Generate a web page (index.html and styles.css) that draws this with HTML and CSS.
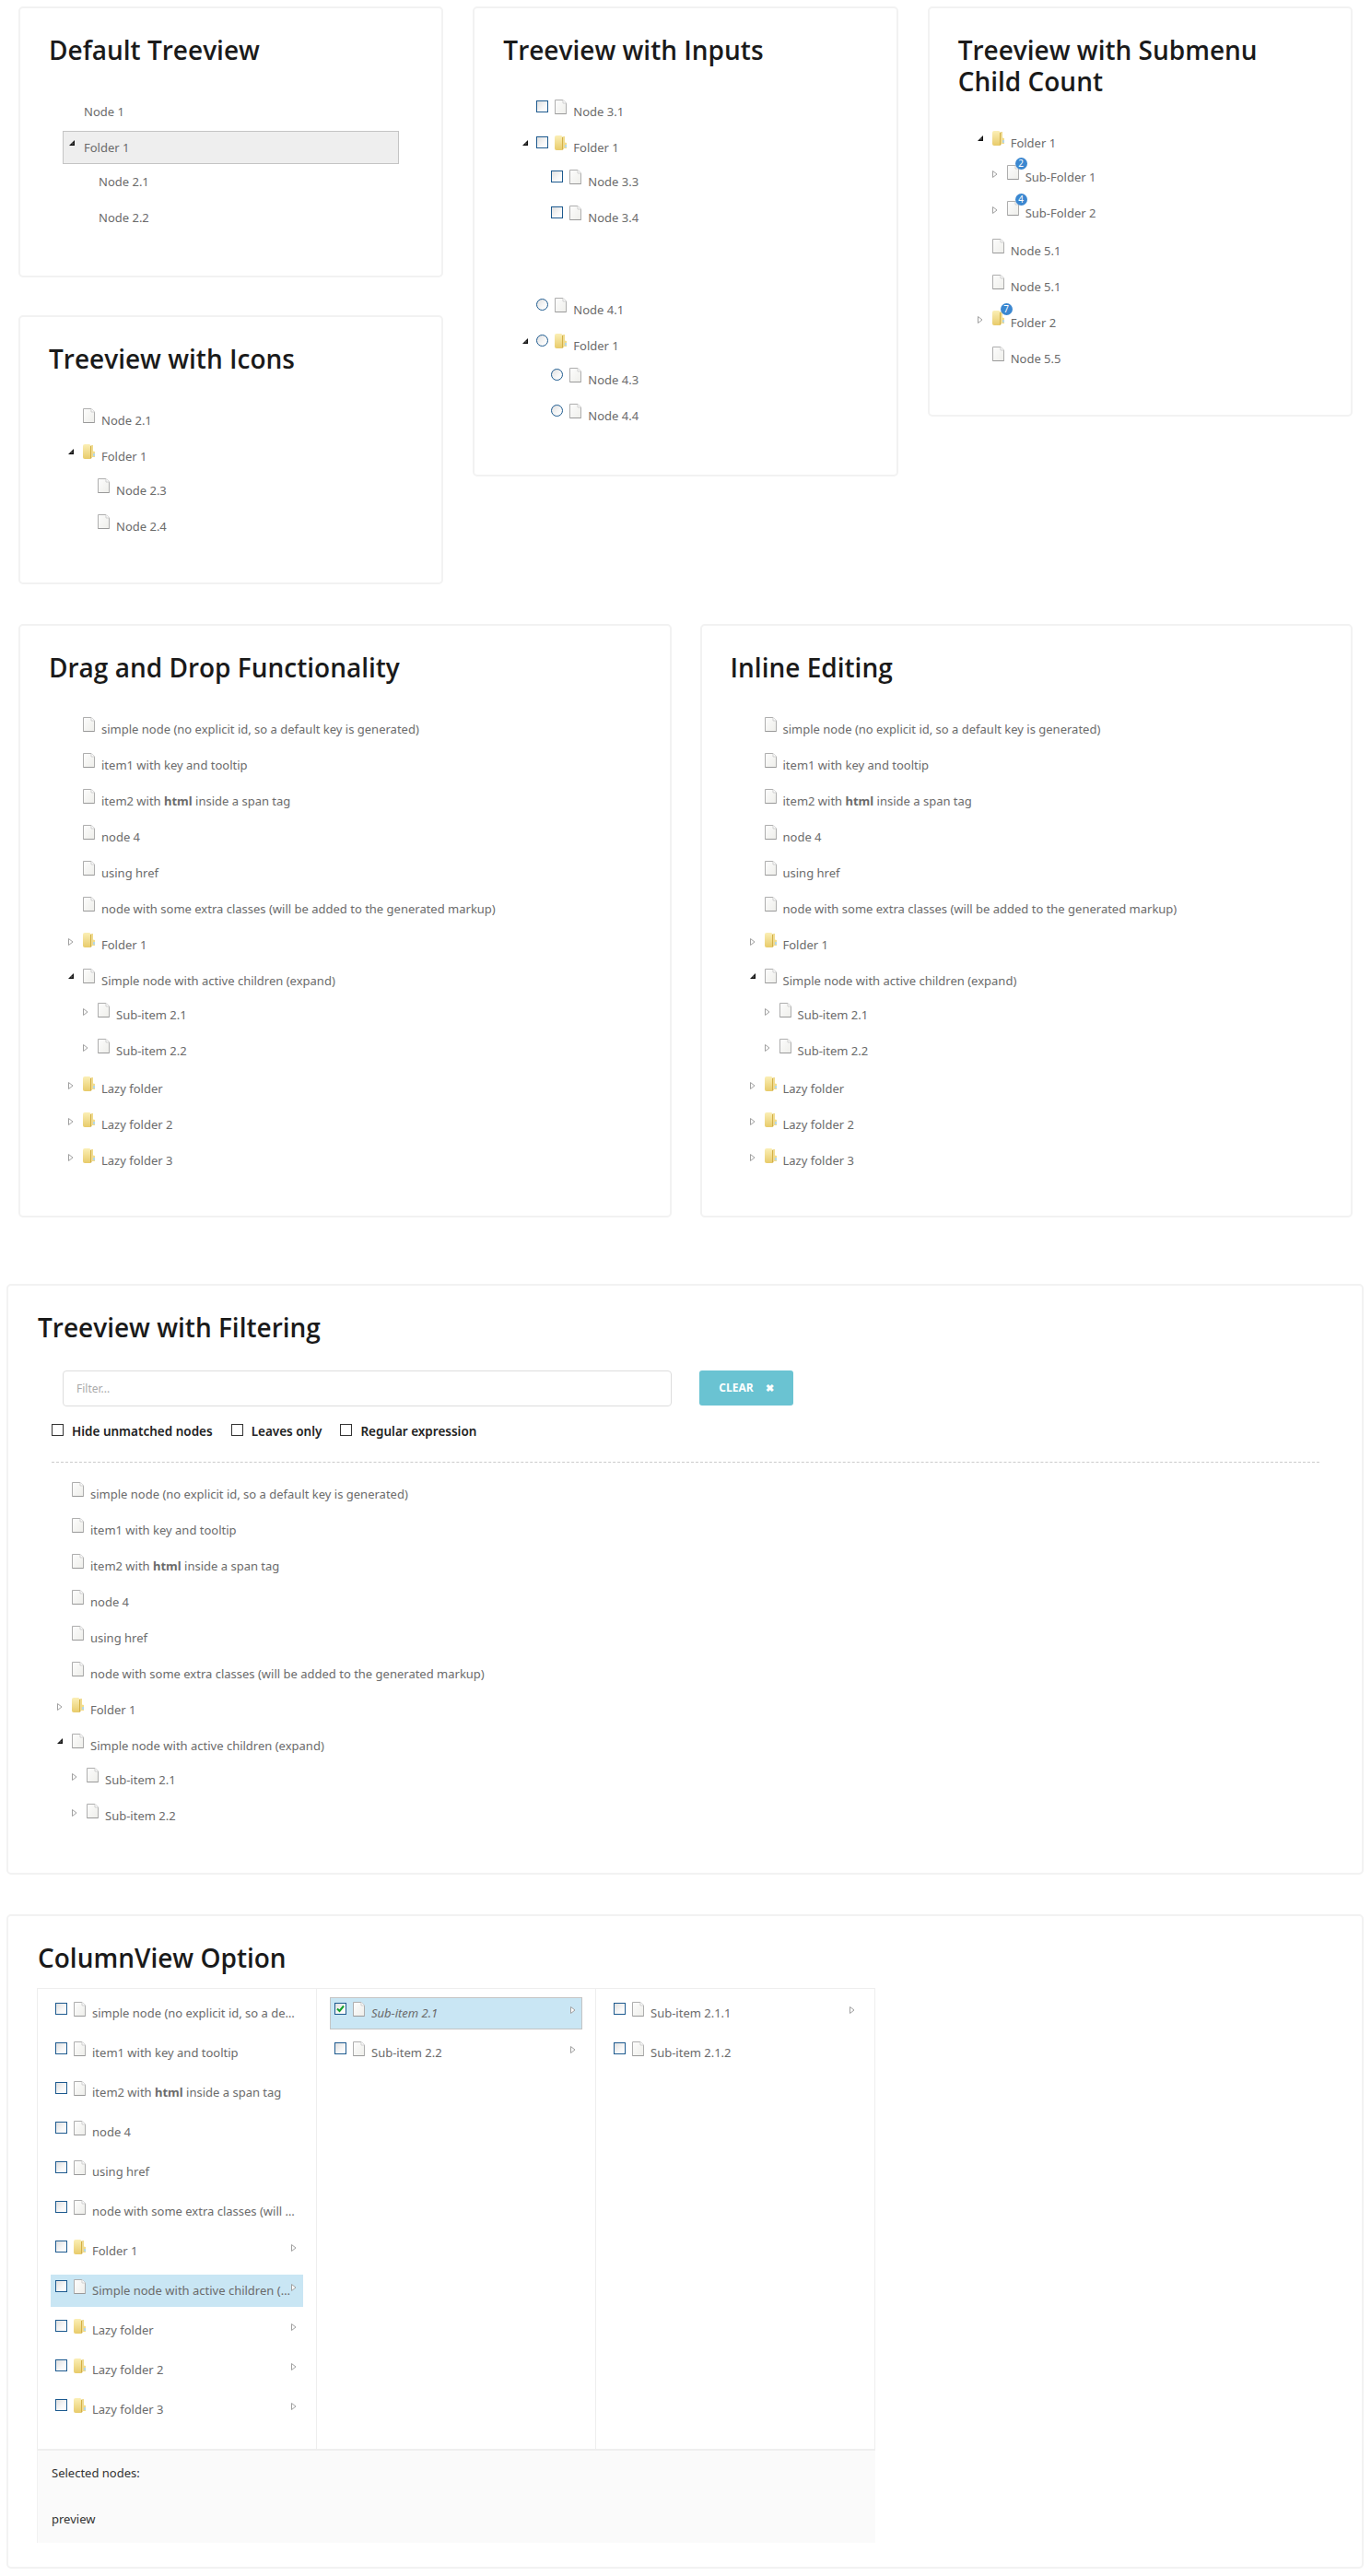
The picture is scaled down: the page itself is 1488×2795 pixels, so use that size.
FILE: index.html
```html
<!DOCTYPE html>
<html lang="en">
<head>
  <meta charset="UTF-8" />
  <title>Tree View</title>
  <link rel="stylesheet" href="styles.css">
</head>
<body>

<!-- shared icons -->
<svg class="sprites" width="0" height="0">
  <defs>
    <linearGradient id="fileFill" x1="0" y1="0" x2="1" y2="1">
      <stop offset="0" stop-color="#fdfdfd" />
      <stop offset="1" stop-color="#eeeeea" />
    </linearGradient>
    <linearGradient id="folderFill" x1="0" y1="0" x2="0" y2="1">
      <stop offset="0" stop-color="#fbefb6" />
      <stop offset="1" stop-color="#e8cb6a" />
    </linearGradient>
    <linearGradient id="boxFill" x1="0" y1="0" x2="1" y2="1">
      <stop offset="0" stop-color="#dedede" />
      <stop offset="0.6" stop-color="#f8f8f8" />
      <stop offset="1" stop-color="#ffffff" />
    </linearGradient>
  </defs>
  <symbol id="file" viewBox="0 0 13 16">
    <path d="M.5.5H9L12.5 4V15.5H.5Z" fill="url(#fileFill)" stroke="#aeaeae" />
    <path d="M9 .5V4H12.5" fill="#fff" stroke="#cfcfcf" />
    <path d="M.5 15.5H12.5" stroke="#999" />
  </symbol>
  <symbol id="folder" viewBox="0 0 13 16">
    <path d="M0 2Q0 0 2 0H7Q8 0 8 1V16H2Q0 16 0 14Z" fill="url(#folderFill)" />
    <path d="M8 2L9.500 1V15L8 16Z" fill="#d3b045" />
    <path d="M9.500 1H11V7.500L13 8V14H9.500Z" fill="#f2dc8a" />
    <path d="M11 10H13V13H11Z" fill="#b5d6e4" />
  </symbol>
  <symbol id="closed" viewBox="0 0 6 8">
    <path d="M.5.500L5 4 .5 7.500Z" fill="#fff" stroke="#a0a0a0" />
  </symbol>
  <symbol id="open" viewBox="0 0 6 6">
    <path d="M0 6L6 0V6Z" fill="#111" />
    <path d="M2.500 4.500L4.500 2.500V4.500Z" fill="#777" />
  </symbol>
  <symbol id="box" viewBox="0 0 13 13">
    <rect x=".5" y=".5" width="12" height="12" fill="url(#boxFill)" stroke="#1d5a8f" />
  </symbol>
  <symbol id="round" viewBox="0 0 13 13">
    <circle cx="6.500" cy="6.500" r="6" fill="url(#boxFill)" stroke="#1d5a8f" />
  </symbol>
  <symbol id="tick" viewBox="0 0 13 13">
    <rect x=".5" y=".5" width="12" height="12" fill="url(#boxFill)" stroke="#1d5a8f" />
    <path d="M3 6.500L5.500 9 10 3.500" fill="none" stroke="#12a02c" stroke-width="2" />
  </symbol>
</svg>

<div class="row-top">
  <div class="stack">
    <section class="panel panel-default">
      <h2>Default Treeview</h2>
      <ul class="tree">
        <li><div class="node plain"><span class="exp"></span><span class="label">Node 1</span></div></li>
        <li><div class="node plain focused"><span class="exp"><svg class="arrow-open"><use href="#open" /></svg></span><span class="label">Folder 1</span></div>
          <ul>
            <li><div class="node plain"><span class="exp"></span><span class="label">Node 2.1</span></div></li>
            <li><div class="node plain"><span class="exp"></span><span class="label">Node 2.2</span></div></li>
          </ul>
        </li>
      </ul>
    </section>

    <section class="panel panel-icons">
      <h2>Treeview with Icons</h2>
      <ul class="tree">
        <li><div class="node"><span class="exp"></span><svg class="ico"><use href="#file" /></svg><span class="label">Node 2.1</span></div></li>
        <li><div class="node"><span class="exp"><svg class="arrow-open"><use href="#open" /></svg></span><svg class="ico"><use href="#folder" /></svg><span class="label">Folder 1</span></div>
          <ul>
            <li><div class="node"><span class="exp"></span><svg class="ico"><use href="#file" /></svg><span class="label">Node 2.3</span></div></li>
            <li><div class="node"><span class="exp"></span><svg class="ico"><use href="#file" /></svg><span class="label">Node 2.4</span></div></li>
          </ul>
        </li>
      </ul>
    </section>
  </div>

  <section class="panel panel-inputs">
    <h2>Treeview with Inputs</h2>
    <ul class="tree">
      <li><div class="node check"><span class="exp"></span><svg class="chk"><use href="#box" /></svg><svg class="ico"><use href="#file" /></svg><span class="label">Node 3.1</span></div></li>
      <li><div class="node check"><span class="exp"><svg class="arrow-open"><use href="#open" /></svg></span><svg class="chk"><use href="#box" /></svg><svg class="ico"><use href="#folder" /></svg><span class="label">Folder 1</span></div>
        <ul>
          <li><div class="node check"><span class="exp"></span><svg class="chk"><use href="#box" /></svg><svg class="ico"><use href="#file" /></svg><span class="label">Node 3.3</span></div></li>
          <li><div class="node check"><span class="exp"></span><svg class="chk"><use href="#box" /></svg><svg class="ico"><use href="#file" /></svg><span class="label">Node 3.4</span></div></li>
        </ul>
      </li>
    </ul>
    <ul class="tree tree-second">
      <li><div class="node check"><span class="exp"></span><svg class="chk"><use href="#round" /></svg><svg class="ico"><use href="#file" /></svg><span class="label">Node 4.1</span></div></li>
      <li><div class="node check"><span class="exp"><svg class="arrow-open"><use href="#open" /></svg></span><svg class="chk"><use href="#round" /></svg><svg class="ico"><use href="#folder" /></svg><span class="label">Folder 1</span></div>
        <ul>
          <li><div class="node check"><span class="exp"></span><svg class="chk"><use href="#round" /></svg><svg class="ico"><use href="#file" /></svg><span class="label">Node 4.3</span></div></li>
          <li><div class="node check"><span class="exp"></span><svg class="chk"><use href="#round" /></svg><svg class="ico"><use href="#file" /></svg><span class="label">Node 4.4</span></div></li>
        </ul>
      </li>
    </ul>
  </section>

  <section class="panel panel-count">
    <h2>Treeview with Submenu Child Count</h2>
    <ul class="tree">
      <li><div class="node"><span class="exp"><svg class="arrow-open"><use href="#open" /></svg></span><svg class="ico"><use href="#folder" /></svg><span class="label">Folder 1</span></div>
        <ul>
          <li><div class="node"><span class="exp"><svg class="arrow"><use href="#closed" /></svg></span><span class="ico-wrap"><svg class="ico"><use href="#file" /></svg><span class="badge">2</span></span><span class="label">Sub-Folder 1</span></div></li>
          <li><div class="node"><span class="exp"><svg class="arrow"><use href="#closed" /></svg></span><span class="ico-wrap"><svg class="ico"><use href="#file" /></svg><span class="badge">4</span></span><span class="label">Sub-Folder 2</span></div></li>
        </ul>
      </li>
      <li><div class="node"><span class="exp"></span><svg class="ico"><use href="#file" /></svg><span class="label">Node 5.1</span></div></li>
      <li><div class="node"><span class="exp"></span><svg class="ico"><use href="#file" /></svg><span class="label">Node 5.1</span></div></li>
      <li><div class="node"><span class="exp"><svg class="arrow"><use href="#closed" /></svg></span><span class="ico-wrap"><svg class="ico"><use href="#folder" /></svg><span class="badge">7</span></span><span class="label">Folder 2</span></div></li>
      <li><div class="node"><span class="exp"></span><svg class="ico"><use href="#file" /></svg><span class="label">Node 5.5</span></div></li>
    </ul>
  </section>
</div>

<div class="row-mid">
  <section class="panel panel-half">
    <h2>Drag and Drop Functionality</h2>
    <ul class="tree">
      <li><div class="node"><span class="exp"></span><svg class="ico"><use href="#file" /></svg><span class="label">simple node (no explicit id, so a default key is generated)</span></div></li>
      <li><div class="node"><span class="exp"></span><svg class="ico"><use href="#file" /></svg><span class="label">item1 with key and tooltip</span></div></li>
      <li><div class="node"><span class="exp"></span><svg class="ico"><use href="#file" /></svg><span class="label">item2 with <b>html</b> inside a span tag</span></div></li>
      <li><div class="node"><span class="exp"></span><svg class="ico"><use href="#file" /></svg><span class="label">node 4</span></div></li>
      <li><div class="node"><span class="exp"></span><svg class="ico"><use href="#file" /></svg><span class="label">using href</span></div></li>
      <li><div class="node"><span class="exp"></span><svg class="ico"><use href="#file" /></svg><span class="label">node with some extra classes (will be added to the generated markup)</span></div></li>
      <li><div class="node"><span class="exp"><svg class="arrow"><use href="#closed" /></svg></span><svg class="ico"><use href="#folder" /></svg><span class="label">Folder 1</span></div></li>
      <li><div class="node"><span class="exp"><svg class="arrow-open"><use href="#open" /></svg></span><svg class="ico"><use href="#file" /></svg><span class="label">Simple node with active children (expand)</span></div>
        <ul>
          <li><div class="node"><span class="exp"><svg class="arrow"><use href="#closed" /></svg></span><svg class="ico"><use href="#file" /></svg><span class="label">Sub-item 2.1</span></div></li>
          <li><div class="node"><span class="exp"><svg class="arrow"><use href="#closed" /></svg></span><svg class="ico"><use href="#file" /></svg><span class="label">Sub-item 2.2</span></div></li>
        </ul>
      </li>
      <li><div class="node"><span class="exp"><svg class="arrow"><use href="#closed" /></svg></span><svg class="ico"><use href="#folder" /></svg><span class="label">Lazy folder</span></div></li>
      <li><div class="node"><span class="exp"><svg class="arrow"><use href="#closed" /></svg></span><svg class="ico"><use href="#folder" /></svg><span class="label">Lazy folder 2</span></div></li>
      <li><div class="node"><span class="exp"><svg class="arrow"><use href="#closed" /></svg></span><svg class="ico"><use href="#folder" /></svg><span class="label">Lazy folder 3</span></div></li>
    </ul>
  </section>

  <section class="panel panel-half">
    <h2>Inline Editing</h2>
    <ul class="tree">
      <li><div class="node"><span class="exp"></span><svg class="ico"><use href="#file" /></svg><span class="label">simple node (no explicit id, so a default key is generated)</span></div></li>
      <li><div class="node"><span class="exp"></span><svg class="ico"><use href="#file" /></svg><span class="label">item1 with key and tooltip</span></div></li>
      <li><div class="node"><span class="exp"></span><svg class="ico"><use href="#file" /></svg><span class="label">item2 with <b>html</b> inside a span tag</span></div></li>
      <li><div class="node"><span class="exp"></span><svg class="ico"><use href="#file" /></svg><span class="label">node 4</span></div></li>
      <li><div class="node"><span class="exp"></span><svg class="ico"><use href="#file" /></svg><span class="label">using href</span></div></li>
      <li><div class="node"><span class="exp"></span><svg class="ico"><use href="#file" /></svg><span class="label">node with some extra classes (will be added to the generated markup)</span></div></li>
      <li><div class="node"><span class="exp"><svg class="arrow"><use href="#closed" /></svg></span><svg class="ico"><use href="#folder" /></svg><span class="label">Folder 1</span></div></li>
      <li><div class="node"><span class="exp"><svg class="arrow-open"><use href="#open" /></svg></span><svg class="ico"><use href="#file" /></svg><span class="label">Simple node with active children (expand)</span></div>
        <ul>
          <li><div class="node"><span class="exp"><svg class="arrow"><use href="#closed" /></svg></span><svg class="ico"><use href="#file" /></svg><span class="label">Sub-item 2.1</span></div></li>
          <li><div class="node"><span class="exp"><svg class="arrow"><use href="#closed" /></svg></span><svg class="ico"><use href="#file" /></svg><span class="label">Sub-item 2.2</span></div></li>
        </ul>
      </li>
      <li><div class="node"><span class="exp"><svg class="arrow"><use href="#closed" /></svg></span><svg class="ico"><use href="#folder" /></svg><span class="label">Lazy folder</span></div></li>
      <li><div class="node"><span class="exp"><svg class="arrow"><use href="#closed" /></svg></span><svg class="ico"><use href="#folder" /></svg><span class="label">Lazy folder 2</span></div></li>
      <li><div class="node"><span class="exp"><svg class="arrow"><use href="#closed" /></svg></span><svg class="ico"><use href="#folder" /></svg><span class="label">Lazy folder 3</span></div></li>
    </ul>
  </section>
</div>

<section class="panel panel-wide panel-filter">
  <h2>Treeview with Filtering</h2>
  <div class="filter-bar">
    <input class="filter-input" type="text" placeholder="Filter..." />
    <button class="btn-clear" type="button">CLEAR <span class="btn-x">&#10006;</span></button>
  </div>
  <div class="filter-opts">
    <label class="opt"><span class="opt-box"></span>Hide unmatched nodes</label>
    <label class="opt"><span class="opt-box"></span>Leaves only</label>
    <label class="opt"><span class="opt-box"></span>Regular expression</label>
  </div>
  <ul class="tree">
    <li><div class="node"><span class="exp"></span><svg class="ico"><use href="#file" /></svg><span class="label">simple node (no explicit id, so a default key is generated)</span></div></li>
    <li><div class="node"><span class="exp"></span><svg class="ico"><use href="#file" /></svg><span class="label">item1 with key and tooltip</span></div></li>
    <li><div class="node"><span class="exp"></span><svg class="ico"><use href="#file" /></svg><span class="label">item2 with <b>html</b> inside a span tag</span></div></li>
    <li><div class="node"><span class="exp"></span><svg class="ico"><use href="#file" /></svg><span class="label">node 4</span></div></li>
    <li><div class="node"><span class="exp"></span><svg class="ico"><use href="#file" /></svg><span class="label">using href</span></div></li>
    <li><div class="node"><span class="exp"></span><svg class="ico"><use href="#file" /></svg><span class="label">node with some extra classes (will be added to the generated markup)</span></div></li>
    <li><div class="node"><span class="exp"><svg class="arrow"><use href="#closed" /></svg></span><svg class="ico"><use href="#folder" /></svg><span class="label">Folder 1</span></div></li>
    <li><div class="node"><span class="exp"><svg class="arrow-open"><use href="#open" /></svg></span><svg class="ico"><use href="#file" /></svg><span class="label">Simple node with active children (expand)</span></div>
      <ul>
        <li><div class="node"><span class="exp"><svg class="arrow"><use href="#closed" /></svg></span><svg class="ico"><use href="#file" /></svg><span class="label">Sub-item 2.1</span></div></li>
        <li><div class="node"><span class="exp"><svg class="arrow"><use href="#closed" /></svg></span><svg class="ico"><use href="#file" /></svg><span class="label">Sub-item 2.2</span></div></li>
      </ul>
    </li>
  </ul>
</section>

<section class="panel panel-wide panel-columns">
  <h2>ColumnView Option</h2>
  <div class="cols">
    <ul class="col">
      <li class="col-node"><svg class="chk"><use href="#box" /></svg><svg class="ico"><use href="#file" /></svg><span class="label">simple node (no explicit id, so a default key is generated)</span></li>
      <li class="col-node"><svg class="chk"><use href="#box" /></svg><svg class="ico"><use href="#file" /></svg><span class="label">item1 with key and tooltip</span></li>
      <li class="col-node"><svg class="chk"><use href="#box" /></svg><svg class="ico"><use href="#file" /></svg><span class="label">item2 with <b>html</b> inside a span tag</span></li>
      <li class="col-node"><svg class="chk"><use href="#box" /></svg><svg class="ico"><use href="#file" /></svg><span class="label">node 4</span></li>
      <li class="col-node"><svg class="chk"><use href="#box" /></svg><svg class="ico"><use href="#file" /></svg><span class="label">using href</span></li>
      <li class="col-node"><svg class="chk"><use href="#box" /></svg><svg class="ico"><use href="#file" /></svg><span class="label">node with some extra classes (will be added to the generated markup)</span></li>
      <li class="col-node"><svg class="chk"><use href="#box" /></svg><svg class="ico"><use href="#folder" /></svg><span class="label">Folder 1</span><svg class="arrow-right"><use href="#closed" /></svg></li>
      <li class="col-node active"><svg class="chk"><use href="#box" /></svg><svg class="ico"><use href="#file" /></svg><span class="label">Simple node with active children (expand)</span><svg class="arrow-right"><use href="#closed" /></svg></li>
      <li class="col-node"><svg class="chk"><use href="#box" /></svg><svg class="ico"><use href="#folder" /></svg><span class="label">Lazy folder</span><svg class="arrow-right"><use href="#closed" /></svg></li>
      <li class="col-node"><svg class="chk"><use href="#box" /></svg><svg class="ico"><use href="#folder" /></svg><span class="label">Lazy folder 2</span><svg class="arrow-right"><use href="#closed" /></svg></li>
      <li class="col-node"><svg class="chk"><use href="#box" /></svg><svg class="ico"><use href="#folder" /></svg><span class="label">Lazy folder 3</span><svg class="arrow-right"><use href="#closed" /></svg></li>
    </ul>
    <ul class="col">
      <li class="col-node selected"><svg class="chk"><use href="#tick" /></svg><svg class="ico"><use href="#file" /></svg><span class="label">Sub-item 2.1</span><svg class="arrow-right"><use href="#closed" /></svg></li>
      <li class="col-node"><svg class="chk"><use href="#box" /></svg><svg class="ico"><use href="#file" /></svg><span class="label">Sub-item 2.2</span><svg class="arrow-right"><use href="#closed" /></svg></li>
    </ul>
    <ul class="col">
      <li class="col-node"><svg class="chk"><use href="#box" /></svg><svg class="ico"><use href="#file" /></svg><span class="label">Sub-item 2.1.1</span><svg class="arrow-right"><use href="#closed" /></svg></li>
      <li class="col-node"><svg class="chk"><use href="#box" /></svg><svg class="ico"><use href="#file" /></svg><span class="label">Sub-item 2.1.2</span></li>
    </ul>
  </div>
  <div class="preview">
    <p>Selected nodes:</p>
    <p>preview</p>
  </div>
</section>

</body>
</html>
```

FILE: styles.css
```css
* {
  box-sizing: border-box;
}
body {
  margin: 0;
  padding: 7px 8px 0 7px;
  background: #fff;
  font-family: "Noto Sans", sans-serif;
  font-size: 13px;
  color: #6b6b6b;
}
ul {
  list-style: none;
  margin: 0;
  padding: 0;
}
h2 {
  margin: 0;
  font-family: "Open Sans", sans-serif;
  font-size: 28px;
  font-weight: 600;
  line-height: 34px;
  color: #1a1a1a;
}
.sprites {
  position: absolute;
}

/* page rows */
.row-top {
  display: grid;
  grid-template-columns: repeat(3, 1fr);
  align-items: start;
  gap: 32px;
  padding: 0 12px 0 13px;
}
.stack {
  display: flex;
  flex-direction: column;
  gap: 41px;
}
.row-mid {
  display: flex;
  gap: 31px;
  margin-top: 43px;
  padding: 0 12px 0 13px;
}
.panel {
  border: 2px solid #f2f2f2;
  border-radius: 5px;
  padding: 28px 31px 0;
  background: #fff;
}
.panel-wide {
  padding-left: 32px;
}
.panel-default { height: 294px; }
.panel-icons { height: 292px; }
.panel-inputs { height: 510px; }
.panel-count { height: 445px; }
.panel-half {
  flex: 1 1 0;
  height: 644px;
}
.panel-filter {
  margin-top: 72px;
  height: 641px;
}
.panel-columns {
  margin-top: 43px;
  height: 710px;
}

/* tree */
.tree {
  margin: 32px 15px 0;
}
.tree-second {
  margin-top: 64px;
}
.tree ul {
  padding-left: 16px;
  margin-bottom: 5px;
}
.tree ul > li:first-child > .node {
  margin-top: 1px;
}
.node {
  display: flex;
  align-items: flex-start;
  height: 36px;
  margin-top: 3px;
  border: 1px solid transparent;
  border-left-width: 0;
  border-right-width: 0;
}
.focused {
  border: 1px solid #c4c4c4;
  background: #eee;
}
.exp {
  position: relative;
  flex: none;
  width: 17px;
  height: 34px;
}
.focused .exp {
  width: 16px;
}
.arrow {
  position: absolute;
  left: 6px;
  top: 10px;
  width: 6px;
  height: 8px;
}
.arrow-open {
  position: absolute;
  left: 6px;
  top: 9px;
  width: 6px;
  height: 6px;
}
.ico {
  flex: none;
  width: 13px;
  height: 16px;
  margin: 4px 0 0 5px;
}
.chk {
  flex: none;
  width: 13px;
  height: 13px;
  margin: 5px 0 0 4px;
}
.check .ico {
  margin-left: 7px;
}
.label {
  margin-left: 7px;
  line-height: 34px;
  white-space: nowrap;
}
.plain .label {
  margin-left: 6px;
}
.ico-wrap {
  position: relative;
  display: flex;
}
.badge {
  position: absolute;
  left: 14px;
  top: -4px;
  width: 13px;
  height: 13px;
  border-radius: 50%;
  background: #3b87d0;
  color: #fff;
  font-size: 10px;
  line-height: 13px;
  text-align: center;
}

/* filter */
.filter-bar {
  display: flex;
  gap: 30px;
  margin: 30px 0 0 27px;
}
.filter-input {
  width: 661px;
  height: 39px;
  border: 1px solid #ddd;
  border-radius: 4px;
  padding: 0 14px;
  font-family: "Noto Sans", sans-serif;
  font-size: 12px;
}
.filter-input::placeholder {
  color: #aaa;
}
.btn-clear {
  width: 102px;
  height: 38px;
  padding-bottom: 3px;
  border: none;
  border-radius: 3px;
  background: #6ac3d2;
  color: #fff;
  font-family: "Open Sans", sans-serif;
  font-size: 12px;
  font-weight: 700;
}
.btn-x {
  margin-left: 10px;
  font-size: 11px;
}
.filter-opts {
  display: flex;
  gap: 20px;
  margin: 18px 15px 0;
  padding-bottom: 24px;
  border-bottom: 1px dashed #ccc;
}
.opt {
  display: flex;
  align-items: center;
  font-size: 13.500px;
  font-weight: 600;
  color: #222;
  line-height: 18px;
}
.opt-box {
  width: 13px;
  height: 13px;
  margin: -3px 9px 0 0;
  border: 1px solid #333;
  background: #fff;
}
.panel-filter .tree {
  margin-top: 16px;
}

/* column view */
.cols {
  display: flex;
  height: 500px;
  width: 910px;
  margin-top: 16px;
  margin-left: -1px;
  border-top: 1px solid #eee;
}
.col {
  width: 303px;
  padding: 9px 14px 0;
  border-left: 1px solid #eee;
}
.col:last-child {
  width: 304px;
  border-right: 1px solid #eee;
}
.col-node {
  position: relative;
  display: flex;
  align-items: flex-start;
  height: 35px;
  margin-bottom: 8px;
  padding-right: 8px;
}
.col-node .chk {
  margin: 6px 0 0 5px;
}
.col-node .ico {
  margin: 5px 0 0 7px;
}
.col-node .label {
  flex: 1 1 0;
  min-width: 0;
  margin-left: 7px;
  line-height: 35px;
  overflow: hidden;
  text-overflow: ellipsis;
}
/* sits on top of the label, long names run under it */
.arrow-right {
  position: absolute;
  right: 7px;
  top: 10px;
  width: 6px;
  height: 8px;
}
.active {
  background: #c9e6f4;
}
.selected {
  background: #c9e6f4;
  border: 1px solid #c4c4c4;
}
.selected .chk {
  margin: 5px 0 0 4px;
}
.selected .ico {
  margin-top: 4px;
}
.selected .label {
  line-height: 33px;
  font-style: italic;
}
.selected .arrow-right {
  right: 6px;
  top: 9px;
}
.preview {
  width: 910px;
  height: 102px;
  margin-left: -1px;
  padding: 0 15px;
  border-top: 2px solid #eee;
  border-left: 1px solid #f2f2f2;
  background: #fafafa;
  color: #333;
}
.preview p {
  margin: 15px 0 0;
  line-height: 18px;
}
.preview p + p {
  margin-top: 32px;
}
```
